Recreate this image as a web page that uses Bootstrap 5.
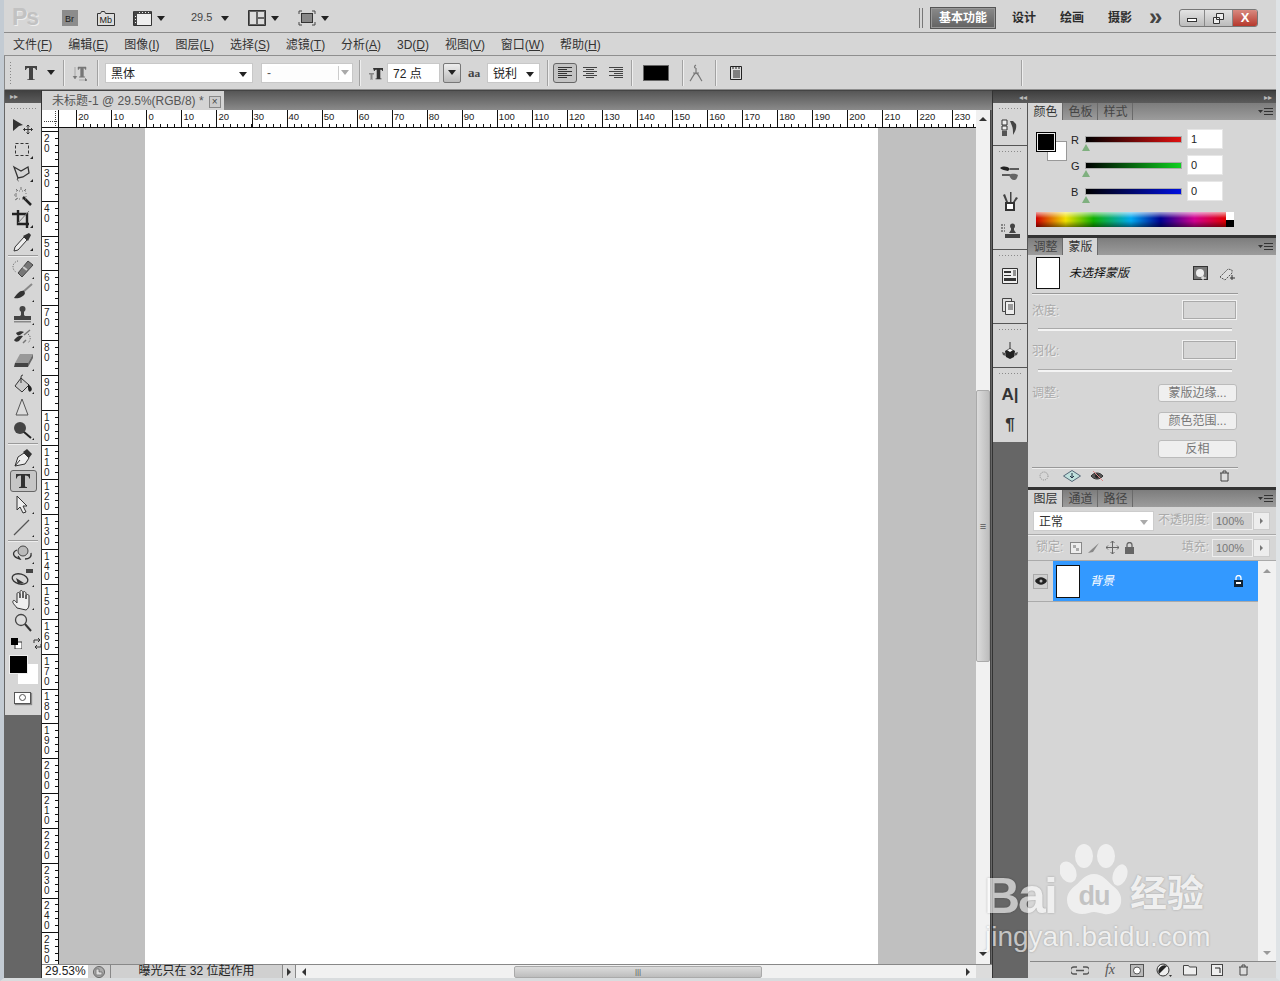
<!DOCTYPE html>
<html lang="zh-CN">
<head>
<meta charset="utf-8">
<title>Photoshop CS5</title>
<link href="https://cdn.jsdelivr.net/npm/bootstrap@5.3.0/dist/css/bootstrap.min.css" rel="stylesheet">
<style>
html,body{margin:0;height:981px;overflow:hidden;background:#c9ced3}
body{font-family:"Liberation Sans","Noto Sans CJK SC",sans-serif;font-size:12px;color:#333;line-height:1.2}
svg{display:block;flex:none}
.psapp{width:1280px;height:981px;border-left:4px solid #c3cbd3;border-right:4px solid #dfe3e6;border-bottom:3px solid #d9dcde;background:#d6d6d6;position:relative;overflow:hidden;box-shadow:inset 0 -1px 0 #555}
.tbar{height:33px;flex:none;border-bottom:1px solid #8c8c8c;padding:4px 18px 0 0}
.pslogo{font-size:23px;color:#c2c2c2;font-weight:700;width:23px;margin-left:8px;text-shadow:1px 1px 0 #eee;letter-spacing:-1px}
.zoomval{margin-left:26px;width:21px;color:#444;font-size:11px}
.m5{margin-left:5px}.m9{margin-left:9px}.m18{margin-left:18px}.m19{margin-left:19px}.m27{margin-left:27px}.m7a{margin-left:7px}.m14a{margin-left:14px}
.m11{margin-left:11px}.m12{margin-left:12px}.m14{margin-left:14px}.m15{margin-left:15px}
.caret-d{display:inline-block;flex:none;width:0;height:0;border-top:5px solid #222;border-left:4px solid transparent;border-right:4px solid transparent}
.caret-l{border-top-color:#aaa}
.wsgrip{width:4px;height:20px;border-left:1px solid #777;border-right:1px solid #777;margin-right:7px}
.wsbtn{width:66px;height:22px;background:linear-gradient(#8a8a8a,#626262);border:1px solid #555;color:#fff;font-weight:700;text-align:center;line-height:20px;box-shadow:inset 0 0 0 1px #999;font-size:12px}
.wslink{font-weight:700;color:#2c2c2c;width:24px;white-space:nowrap;margin-left:24px}
.wslink1{margin-left:16px}
.wsmore{margin-left:17px;font-weight:700;font-size:24px;line-height:18px;color:#444;width:16px;margin-top:-3px}
.winbtns{margin-left:14px;width:79px;height:18px;border:1px solid #777;border-radius:3px;overflow:hidden;background:linear-gradient(#e4e4e4,#bcbcbc)}
.wmin{width:25px;border-right:1px solid #888}.wres{width:28px;border-right:1px solid #888}
.wclose{flex:1;background:linear-gradient(#d88a80,#b6382c);color:#fff;font-weight:700;font-size:13px}
.menubar{height:23px;flex:none;padding:2px 0 0 9px;gap:15.9px;color:#333;border-bottom:1px solid #8f8f8f}
.menubar span{white-space:nowrap}
.optbar{height:34px;flex:none;border-bottom:1px solid #8f8f8f;border-left:1px solid #888}
.opt-grip{width:3px;height:24px;margin-left:4px;background:radial-gradient(circle,#888 40%,transparent 45%) 0 0/3px 3px}
.opt-sep{width:1px;height:26px;background:#a2a2a2;box-shadow:1px 0 0 #eee;flex:none}
.fld{background:#fff;height:20px;flex:none;padding:3px 5px 0;border:1px solid #c8c8c8;color:#222}
.fld-font{width:148px;margin-left:7px}.fld-style{width:92px;margin-left:8px;padding:0 3px 0 5px}
.fld-size{width:53px;margin-left:3px}.fld-aa{width:53px;margin-left:3px}
.styleinner{width:72px;height:14px;border-right:1px solid #ccc;line-height:14px;color:#555;background:#fdfdfd}
.ddbtn{width:18px;height:20px;margin-left:3px;border:1px solid #777;border-radius:2px;background:linear-gradient(#eee,#bbb)}
.aatext{width:16px;margin-left:7px;font-family:"Liberation Serif",serif;font-size:13px;color:#444;font-weight:700}
.alignsel{width:24px;height:20px;margin-left:5px;border:1px solid #666;border-radius:3px;background:#c4c4c4}
.a2{margin-left:5px}.a3{margin-left:10px}
.colorbox{width:26px;height:16px;background:#000;border:1px solid #666;margin-left:11px}
.s1{margin-left:8px}.s2{margin-left:9px}.s3{margin-left:6px}.s4{margin-left:7px}.s5{margin-left:13px}.s6{margin-left:11px}.s7{margin-left:278px}
.i8{margin-left:8px}.i12{margin-left:12px}.i5{margin-left:5px}.i13{margin-left:13px}.i3{margin-left:3px}
.mainrow{height:888px;flex:none}
.toolbox{width:38px;background:#666;border-right:1px solid #333;flex:none}
.dockhead{height:13px;background:linear-gradient(#3f3f3f,#5c5c5c);color:#bbb;font-size:8px;line-height:13px;flex:none}
.tbhead{padding-left:5px;margin-left:1px}
.toolsbody{background:#d6d6d6;margin-left:1px;height:612px;padding-top:1px;flex:none}
.gripdots{height:3px;margin:3px 5px 0;background:radial-gradient(circle,#8a8a8a 40%,transparent 45%) 0 0/3px 3px}
.toollist{margin-top:5px}
.toolbtn{height:23px}
.toolsel{width:27px;height:22px;border:1px solid #666;border-radius:3px;background:#c6c6c6}
.toolsep{height:1px;margin:1.75px 3px;background:#9a9a9a;box-shadow:0 1px 0 #eee}
.colorpair{padding-left:6px;gap:10px;height:18px}
.swstack{display:grid;height:30px;margin:2px 0 0 4px;width:30px}
.swstack>div{grid-area:1/1}
.swbg{width:20px;height:20px;background:#fff;margin:9px 0 0 9px}
.swfg{width:19px;height:19px;background:#000;border:1px solid #eee}
.qmask{width:17px;height:12px;background:#fff;border:1px solid #555;margin:7px 0 0 9px;box-shadow:1px 1px 1px #888}
.qmask i{display:block;width:7px;height:7px;border:1px solid #555;border-radius:50%}
.center{width:950px;flex:none;background:#666}
.tabbar{height:20px;background:linear-gradient(#565656,#8a8a8a);flex:none;border-top:1px solid #444}
.doctab{width:182px;height:19px;background:#d4d4d4;color:#555;padding:2px 0 0 10px;font-size:12px;white-space:nowrap;gap:5px}
.tabx{width:12px;height:12px;border:1px solid #888;background:#ccc;font-size:10px;line-height:9px;text-align:center;color:#444}
.workrow{min-height:0}
.workarea{width:934px;flex:none;min-height:0}
.hrow{height:18px;flex:none}
.rcorner{width:17px;background-color:#fff;border-right:1px solid #111;border-bottom:1px solid #111;flex:none;background-image:repeating-linear-gradient(#444 0 1px,transparent 1px 2px),repeating-linear-gradient(90deg,#444 0 1px,transparent 1px 2px);background-size:1px 15px,14px 1px;background-repeat:no-repeat;background-position:13px 1px,2px 11px}
.hruler{flex:1;display:flex;overflow:hidden;background:#fff;border-bottom:1px solid #111;padding-left:17.3px}
.hc{width:35.05px;flex:none;border-left:1px solid #111;font-size:9.5px;line-height:12px;padding:1px 0 0 1px;color:#222;background:repeating-linear-gradient(90deg,transparent 0,transparent 6px,#111 6px,#111 7.01px) 0 100%/100% 3px no-repeat}
.canvasrow{flex:1;min-height:0}
.vruler{width:17px;flex:none;background:#fff;border-right:1px solid #111;overflow:hidden;padding-top:3px}
.vc{height:34.85px;border-top:1px solid #111;font-size:10px;line-height:10px;padding:2px 0 0 2px;color:#222;background:repeating-linear-gradient(0deg,transparent 0,transparent 6px,#111 6px,#111 6.97px) 100% 0/3px 100% no-repeat;overflow:hidden}
.vc span{display:block;width:7px;word-break:break-all}
.canvasarea{flex:1;background:#c0c0c0;padding-left:86px;min-height:0}
.docpage{width:733px;height:100%;background:#fff}
.vscroll{width:15px;flex:none;background:#f1f1f1;border-right:1px solid #444;padding-top:3px}
.vthumb{height:272px;margin-top:269px;width:14px;background:linear-gradient(90deg,#dcdcdc,#bdbdbd);border:1px solid #aaa;border-radius:2px;font-size:11px;color:#555;line-height:8px}
.caret-u{width:0;height:0;border-bottom:4px solid #333;border-left:4px solid transparent;border-right:4px solid transparent}
.caret-dn{width:0;height:0;border-top:4px solid #333;border-left:4px solid transparent;border-right:4px solid transparent}
.caret-lf{width:0;height:0;border-right:4px solid #333;border-top:4px solid transparent;border-bottom:4px solid transparent}
.caret-rt{width:0;height:0;border-left:4px solid #333;border-top:4px solid transparent;border-bottom:4px solid transparent}
.statusbar{height:14px;flex:none;background:#dcdcdc;border-top:1px solid #888}
.stzoom{width:46px;background:#fff;padding-left:3px;height:100%;line-height:13px;color:#222;flex:none}
.sticon{width:23px;height:100%;background:#d0d0d0;border-right:1px solid #888;flex:none}
.stmsg{width:172px;height:100%;background:#d0d0d0;text-align:center;color:#222;line-height:13px;flex:none;border-right:1px solid #888}
.starrow{width:13px;height:100%;background:#dedede;border-right:1px solid #888;flex:none}
.hscroll{width:680px;height:100%;background:#f1f1f1;padding:0 6px;flex:none}
.hthumb{width:248px;height:12px;margin-left:208px;background:linear-gradient(#dcdcdc,#bdbdbd);border:1px solid #aaa;border-radius:2px;font-size:8px;color:#555;line-height:8px}
.dock{width:284px;flex:none;background:#666;border-left:1px solid #333;min-height:0}
.dockhead-r{padding:0 4px 0 26px;border-top:1px solid #333}
.dockbody{min-height:0}
.iconcol{width:35px;flex:none;background:#666}
.iconcol-g{background:#d6d6d6;border-bottom:1px solid #555;border-right:1px solid #555;padding-top:1px}
.g1{height:43px}.g2{height:104px}.g3{height:74px}.g4{height:44px}.g5{height:74px;border-bottom:0}
.dicon{height:30px}
.dm3{margin-top:3px}.dm4{margin-top:4px}.dm5{margin-top:5px}
.dockA{font-size:17px;color:#333;line-height:22px}
.panelcol{width:248px;flex:none;background:#333}
.pnl{background:#d6d6d6;flex:none}
.pn1{height:132px}.pn2{height:249px;margin-top:3px}.pn3{flex:1;margin-top:3px;min-height:0}
.ptabs{height:17px;background:linear-gradient(#7d7d7d,#9c9c9c);padding:0;flex-wrap:nowrap;flex:none}
.ptabs .nav-link{height:17px;width:35px;padding:0 0 0 1px;text-align:center;color:#444;line-height:19px;font-size:12px;border-right:1px solid #6a6a6a;border-radius:0;flex:none}
.ptabs .nav-link.active{background:#d6d6d6;color:#333}
.pmenu{margin-left:auto;margin-right:3px;align-self:center}
.cbody{padding:9px 0 0 8px;height:115px}
.swsmall{display:grid;width:32px;height:32px;flex:none}
.swsmall>div{grid-area:1/1}
.sb{width:20px;height:20px;background:#fff;border:1px solid #999;margin:12px 0 0 11px}
.sf{width:20px;height:20px;background:#000;border:1px solid #000;outline:1px solid #eee;outline-offset:-2px;margin:3px 0 0 0}
.cslid{width:152px;margin-left:3px}
.csrow{height:26px}
.cslab{width:14px;color:#222;font-size:11px;margin-top:5px}
.cslidbar{padding-top:7px;width:97px;flex:none}
.cbar{width:97px;height:7px;border:1px solid #aaa}
.cr{background:linear-gradient(90deg,#000,#e01010)}.cg{background:linear-gradient(90deg,#000,#0fd020)}.cb{background:linear-gradient(90deg,#000,#0010e0)}
.ctri{width:0;height:0;border-bottom:7px solid #7fb07f;border-left:4px solid transparent;border-right:4px solid transparent;margin-top:1px;margin-left:-3px}
.cval{width:36px;height:20px;margin-left:5px;background:#fff;border:1px solid #e6e6e6;padding:0 0 0 3px;line-height:18px;color:#222;font-size:11px}
.spect{width:198px;height:15px;margin-top:5px;display:flex;background:linear-gradient(rgba(255,255,255,.65),rgba(255,255,255,0) 40%,rgba(0,0,0,0) 60%,rgba(0,0,0,.45)),linear-gradient(90deg,#d00000,#f0e000 15%,#10b000 29%,#00a8f0 48%,#000090 63%,#d00090 80%,#e00000 96%);justify-content:flex-end}
.spbw{width:8px;background:linear-gradient(#fff 50%,#000 50%)}
.adj{padding:2px 38px 0 4px}
.mthumb{width:24px;height:32px;background:#fff;border:1px solid #111;margin-left:4px;flex:none}
.mrow{height:32px}
.mtext{font-style:italic;margin-left:9px;color:#111;width:124px;flex:none}
.phr{height:1px;background:#999;margin-top:4px;box-shadow:0 1px 0 #eee}
.disl{color:#aaa;text-shadow:1px 1px 0 #eee;width:150px;flex:none;padding-top:2px}
.disin{width:55px;height:20px;border:1px solid #f2f2f2;outline:1px solid #aaa;outline-offset:-2px}
.plrow{height:20px;margin-top:6px}
.plrow2{margin-top:9px}
.psl{height:3px;margin:8px 6px 0;background:#f4f4f4;border-top:1px solid #aaa}
.psl2{margin:9px 6px 7px}
.pbtn.btn{--bs-btn-padding-y:0;--bs-btn-padding-x:0;width:79px;height:18px;background:#efefef;border:1px solid #bbb;border-radius:3px;color:#777;font-size:12px;line-height:16px;display:block}
.brow{height:28px}
.adjl{width:126px;color:#aaa;text-shadow:1px 1px 0 #eee;flex:none}
.adjfoot{padding:0 8px 0 0;height:16px}
.lyr1{height:27px;padding:0 6px 0 5px;flex:none}
.lsel{width:121px;height:20px;background:#fff;border:1px solid #ccc;padding:3px 5px 0;color:#333;flex:none}
.ltxt{color:#aaa;text-shadow:1px 1px 0 #eee;white-space:nowrap}
.lmode{margin-left:4px;width:54px;flex:none}
.lfill{margin-right:-2px}
.lval{width:41px;height:18px;background:#d0d0d0;border:1px solid #eee;color:#777;padding-left:3px;line-height:16px;font-size:11px;flex:none}
.lbtn{width:17px;height:18px;background:#ededed;border:1px solid #ccc;flex:none}
.caret-g{width:0;height:0;border-left:3px solid #777;border-top:3px solid transparent;border-bottom:3px solid transparent}
.lyr2{height:27px;padding:0 6px 0 8px;border-top:1px solid #aaa;box-shadow:inset 0 1px 0 #eee;gap:5px;border-bottom:1px solid #aaa;flex:none}
.llock{width:29px;color:#aaa;text-shadow:1px 1px 0 #eee;white-space:nowrap}
.lyrlist{flex:1;min-height:0}
.lyrmain{width:230px;flex:none}
.lyrrow{height:41px;border-bottom:1px solid #aaa}
.eyecol{width:25px;height:40px;padding-left:5px;flex:none}
.eyebox{width:15px;height:15px;border:1px solid #aaa;background:#cfcfcf}
.lyrblue{flex:1;height:40px;background:#3399ff;padding-left:3px;color:#fff;font-style:italic}
.lthumb{width:24px;height:33px;background:#fff;border:1px solid #111;flex:none}
.lname{margin-left:10px;width:143px;flex:none}
.lscroll{width:18px;flex:none;background:#f1f1f1;padding:8px 0 6px}
.lscroll .caret-u{border-bottom-color:#999}.lscroll .caret-dn{border-top-color:#999}
.lfoot{height:17px;border-top:1px solid #888;flex:none;padding-left:41px;margin-left:2px}
.fxt{font-family:"Liberation Serif",serif;font-style:italic;font-size:14px;color:#555;width:18px;text-align:center;line-height:16px;margin-left:12px}
.wmark{position:absolute;left:973px;top:842px;width:240px;height:112px;color:#fff;opacity:.62;pointer-events:none;z-index:5;overflow:visible;text-shadow:0 0 2px rgba(0,0,0,.45)}
.wm1{height:74px}
.wmbai{font-weight:700;font-size:50px;letter-spacing:-2px;line-height:40px;margin-top:34px;width:83px;flex:none;padding-left:7px;white-space:nowrap}
.wmpaw{width:68px;height:76px;flex:none;display:grid}
.wmpaw>*{grid-area:1/1}
.wmdu{font-weight:700;font-size:27px;color:#b9b9b9;text-align:center;margin-top:42px;line-height:24px;letter-spacing:-1px;text-shadow:none}
.wmcn{font-weight:700;font-size:37px;line-height:40px;margin-top:33px;margin-left:2px;white-space:nowrap}
.wmurl{font-size:28px;line-height:34px;margin-top:4px;margin-left:8px;white-space:nowrap}
</style>
</head>
<body>
<div class="psapp d-flex flex-column">

<div class="tbar d-flex align-items-center">
  <div class="pslogo">Ps</div>
  <svg class="m27" width="16" height="16" viewBox="0 0 16 16"><rect width="16" height="16" fill="#8c8c8c"/><text x="3" y="12" font-size="9" font-family="Liberation Sans" fill="#222">Br</text></svg>
  <svg class="m19" width="18" height="16" viewBox="0 0 18 16"><path d="M.5 3.500h3l1-2h3l1 2h9v12H.5z" fill="#ddd" stroke="#333"/><text x="2.500" y="13" font-size="9" font-family="Liberation Sans" fill="#222">Mb</text></svg>
  <svg class="m18" width="19" height="16" viewBox="0 0 19 16"><path d="M.5 1.500h18v14H.5z" fill="#eee" stroke="#333"/><path d="M1 1h17v3H1zM1 4h3v11H1z" fill="#444"/><path d="M2 6h1v1H2zM2 9h1v1H2zM2 12h1v1H2zM6 2h1v1H6zM9 2h1v1H9zM12 2h1v1h-1zM15 2h1v1h-1z" fill="#eee"/></svg>
  <span class="caret-d m5"></span>
  <div class="zoomval">29.5</div>
  <span class="caret-d m9"></span>
  <svg class="m19" width="18" height="16" viewBox="0 0 18 16"><path d="M.5.5h17v15H.5z" fill="#666" stroke="#333"/><path d="M2 2h6v12H2zM10 2h6v5h-6zM10 9h6v5h-6z" fill="#ddd"/></svg>
  <span class="caret-d m5"></span>
  <svg class="m19" width="18" height="16" viewBox="0 0 18 16"><path d="M1 4V1h3M14 1h3v3M17 12v3h-3M4 15H1v-3" fill="none" stroke="#444"/><rect x="3.500" y="3.500" width="11" height="9" fill="#888" stroke="#333"/></svg>
  <span class="caret-d m5"></span>
  <div class="ms-auto d-flex align-items-center">
    <div class="wsgrip"></div>
    <div class="wsbtn">基本功能</div>
    <div class="wslink wslink1">设计</div>
    <div class="wslink">绘画</div>
    <div class="wslink">摄影</div>
    <div class="wsmore">»</div>
    <div class="winbtns d-flex">
      <div class="wmin d-flex align-items-center justify-content-center"><svg width="10" height="8" viewBox="0 0 10 8"><rect x=".5" y="4.500" width="9" height="3" fill="#fff" stroke="#333"/></svg></div>
      <div class="wres d-flex align-items-center justify-content-center"><svg width="11" height="11" viewBox="0 0 11 11"><path d="M3.500.5h7v6h-7zM.5 4.500h6v6h-6z" fill="#eee" stroke="#333"/></svg></div>
      <div class="wclose d-flex align-items-center justify-content-center">X</div>
    </div>
  </div>
</div>

<nav class="menubar d-flex align-items-center">
  <span>文件(<u>F</u>)</span><span>编辑(<u>E</u>)</span><span>图像(<u>I</u>)</span><span>图层(<u>L</u>)</span><span>选择(<u>S</u>)</span><span>滤镜(<u>T</u>)</span><span>分析(<u>A</u>)</span><span>3D(<u>D</u>)</span><span>视图(<u>V</u>)</span><span>窗口(<u>W</u>)</span><span>帮助(<u>H</u>)</span>
</nav>

<div class="optbar d-flex align-items-center">
  <div class="opt-grip"></div>
  <svg class="i12" width="14" height="16" viewBox="0 0 14 16"><path d="M1 1h12v4h-1c-.4-1.500-1-2-3-2v10.500c0 .8.500 1 2 1V15H3v-.5c1.500 0 2-.2 2-1V3c-2 0-2.600.5-3 2H1z" fill="#444"/></svg>
  <span class="caret-d m9"></span>
  <div class="opt-sep s1"></div>
  <svg class="i8" width="16" height="16" viewBox="0 0 16 16"><path d="M6 2h8v2.500h-.6c-.2-1-.6-1.300-2-1.300V11c0 .6.300.7 1.200.7v.6H7.400v-.6c.9 0 1.200-.1 1.200-.7V3.200c-1.400 0-1.800.3-2 1.300H6zM3 2v11M1 11l2 3 2-3M7 15h8M13 13l2 2-2 2" fill="#777" stroke="#777" stroke-width=".5"/></svg>
  <div class="opt-sep s2"></div>
  <div class="fld fld-font d-flex align-items-center justify-content-between"><span>黑体</span><span class="caret-d"></span></div>
  <div class="fld fld-style d-flex align-items-center justify-content-between"><div class="styleinner">-</div><span class="caret-d caret-l"></span></div>
  <div class="opt-sep s3"></div>
  <svg class="i8" width="16" height="16" viewBox="0 0 16 16"><path d="M5 3h10v3h-.7c-.2-1-.6-1.300-2-1.300V13c0 .5.300.6 1.200.6v.7H7.500v-.7c.9 0 1.200-.1 1.200-.6V4.700c-1.400 0-1.800.3-2 1.300H6z" fill="#333"/><path d="M1 8h5v1.500H4.500V14H5v.6H2V14h.5V9.500H1z" fill="#888"/></svg>
  <div class="fld fld-size d-flex align-items-center">72 点</div>
  <div class="ddbtn d-flex align-items-center justify-content-center"><span class="caret-d"></span></div>
  <div class="aatext">a<small>a</small></div>
  <div class="fld fld-aa d-flex align-items-center justify-content-between"><span>锐利</span><span class="caret-d"></span></div>
  <div class="opt-sep s4"></div>
  <div class="alignsel d-flex align-items-center justify-content-center"><svg width="14" height="12" viewBox="0 0 14 12"><path d="M0 .5h14M0 2.500h9M0 4.500h14M0 6.500h9M0 8.500h14M0 10.500h9" stroke="#333"/></svg></div>
  <svg class="a2" width="16" height="12" viewBox="0 0 16 12"><path d="M1 .5h14M4 2.500h8M1 4.500h14M4 6.500h8M1 8.500h14M4 10.500h8" stroke="#444"/></svg>
  <svg class="a3" width="16" height="12" viewBox="0 0 16 12"><path d="M1 .5h14M6 2.500h9M1 4.500h14M6 6.500h9M1 8.500h14M6 10.500h9" stroke="#444"/></svg>
  <div class="opt-sep s4"></div>
  <div class="colorbox"></div>
  <div class="opt-sep s5"></div>
  <svg class="i5" width="16" height="18" viewBox="0 0 16 18"><path d="M8 1c-2 1-2 3 0 3M8 4v5M2 17c2-2 3-7 6-8 3 1 4 6 6 8M5 9h6" fill="none" stroke="#777" stroke-width="1.200"/></svg>
  <div class="opt-sep s6"></div>
  <svg class="i13" width="14" height="16" viewBox="0 0 14 16"><path d="M1.500 1.500h11v13h-11z" fill="#ddd" stroke="#222"/><path d="M4 1v3M7 1v3M10 1v3M4 6h7M4 8h7M4 10h7M4 12h7" stroke="#222"/></svg>
  <div class="opt-sep s7"></div>
</div>

<div class="mainrow d-flex">
  <aside class="toolbox d-flex flex-column">
    <div class="dockhead tbhead">▸▸</div>
    <div class="toolsbody">
      <div class="gripdots"></div>
      <div class="toollist d-flex flex-column">
        <div class="toolbtn d-flex align-items-center justify-content-center"><svg width="24" height="18" viewBox="0 0 24 18"><path d="M2 1l10 6-4 1-6 5z" fill="#333"/><path d="M17 7v9M12.500 11.500h9M15.500 8.500L17 7l1.500 1.500M15.500 14.500L17 16l1.500-1.500M14 10l-1.500 1.500L14 13M20 10l1.500 1.500L20 13" fill="none" stroke="#333"/></svg></div>
        <div class="toolbtn d-flex align-items-center justify-content-center"><svg width="24" height="20" viewBox="0 0 24 20"><rect x="4.500" y="3.500" width="13" height="12" fill="none" stroke="#333" stroke-dasharray="3 2"/><path d="M22 19h-3l3-3z" fill="#222"/></svg></div>
        <div class="toolbtn d-flex align-items-center justify-content-center"><svg width="24" height="20" viewBox="0 0 24 20"><path d="M3 4l7 4 7-4 1 6-6 4-5 1z" fill="none" stroke="#333" stroke-width="1.300"/><path d="M7 15c-1 1-1 2 .5 3" fill="none" stroke="#333"/><path d="M22 19h-3l3-3z" fill="#222"/></svg></div>
        <div class="toolbtn d-flex align-items-center justify-content-center"><svg width="24" height="20" viewBox="0 0 24 20"><path d="M12 11l8 8" stroke="#222" stroke-width="2.500"/><path d="M5 5h10v8H5z" fill="none" stroke="#777" stroke-dasharray="1 2"/><path d="M3 9h3M10 1v3M15 3l-2 2M5 3l2 2M4 14l3-2" stroke="#777"/></svg></div>
        <div class="toolbtn d-flex align-items-center justify-content-center"><svg width="24" height="20" viewBox="0 0 24 20"><path d="M7 1v14h11M1 5h15v14" fill="none" stroke="#222" stroke-width="2.400"/><path d="M7 14L18 2" stroke="#777"/><path d="M22 19h-3l3-3z" fill="#222"/></svg></div>
        <div class="toolbtn d-flex align-items-center justify-content-center"><svg width="24" height="20" viewBox="0 0 24 20"><path d="M13 5L4 15l-1 4 4-1 9-10z" fill="#eee" stroke="#333"/><path d="M12 4l6-3 2 2-3 6z" fill="#333"/><path d="M22 19h-3l3-3z" fill="#222"/></svg></div>
      </div>
      <div class="toolsep"></div>
      <div class="d-flex flex-column">
        <div class="toolbtn d-flex align-items-center justify-content-center"><svg width="24" height="20" viewBox="0 0 24 20"><path d="M7 14L17 2l5 4-11 12z" fill="#777" stroke="#444"/><path d="M12 8l4 3" stroke="#ccc" stroke-width="2"/><path d="M7 2a6 6 0 0 0-5 6 6 6 0 0 0 3 5" fill="none" stroke="#555" stroke-dasharray="1 1.500"/><path d="M23 20h-2l2-2z" fill="#222"/></svg></div>
        <div class="toolbtn d-flex align-items-center justify-content-center"><svg width="24" height="20" viewBox="0 0 24 20"><path d="M21 2L12 10" stroke="#888" stroke-width="2"/><path d="M13 9c-4-1-7 3-10 7 4 1 10-1 11-5z" fill="#333"/><path d="M23 20h-2l2-2z" fill="#222"/></svg></div>
        <div class="toolbtn d-flex align-items-center justify-content-center"><svg width="24" height="20" viewBox="0 0 24 20"><circle cx="11.500" cy="4" r="3" fill="#444"/><path d="M10 6h3v4l2 2H8l2-2z" fill="#444"/><path d="M3 11h17v4H3z" fill="#444"/><path d="M3 16h17v1.500H3z" fill="#888"/><path d="M23 20h-2l2-2z" fill="#222"/></svg></div>
        <div class="toolbtn d-flex align-items-center justify-content-center"><svg width="24" height="20" viewBox="0 0 24 20"><path d="M3 12c3-4 6-5 9-4l-4 5c-2 1-4 1-5-1zM5 5c3-2 6-2 8-1l-4 3c-2 1-3 0-4-2z" fill="#333"/><path d="M13 7l6-5M12 15l3-3" stroke="#777" stroke-width="1.500"/><path d="M17 6c3 2 3 6 0 9" fill="none" stroke="#555" stroke-dasharray="1 1.500"/><path d="M23 20h-2l2-2z" fill="#222"/></svg></div>
        <div class="toolbtn d-flex align-items-center justify-content-center"><svg width="24" height="20" viewBox="0 0 24 20"><path d="M9 3h13l-5 9H4z" fill="#999"/><path d="M4 12h13v4H3z" fill="#444"/><path d="M17 12l5-9v4l-5 9z" fill="#666"/><path d="M23 20h-2l2-2z" fill="#222"/></svg></div>
        <div class="toolbtn d-flex align-items-center justify-content-center"><svg width="24" height="20" viewBox="0 0 24 20"><path d="M10 4l8 7-7 7-7-6z" fill="#ccc" stroke="#333"/><path d="M10 9V3a2 2 0 0 1 2-2" fill="none" stroke="#333"/><path d="M17 10c3 2 5 5 3 7s-3-1-3-3z" fill="#222"/><path d="M23 20h-2l2-2z" fill="#222"/></svg></div>
        <div class="toolbtn d-flex align-items-center justify-content-center"><svg width="24" height="20" viewBox="0 0 24 20"><path d="M11 2L5 18h12z" fill="#ddd" stroke="#555"/></svg></div>
        <div class="toolbtn d-flex align-items-center justify-content-center"><svg width="24" height="20" viewBox="0 0 24 20"><circle cx="9" cy="8" r="6" fill="#444"/><path d="M13 12l7 6" stroke="#222" stroke-width="2"/><path d="M23 20h-2l2-2z" fill="#222"/></svg></div>
      </div>
      <div class="toolsep"></div>
      <div class="d-flex flex-column">
        <div class="toolbtn d-flex align-items-center justify-content-center"><svg width="24" height="20" viewBox="0 0 24 20"><path d="M4 18l3-9 6-4 5 5-4 6z" fill="#eee" stroke="#333"/><path d="M12 4l4-3 5 5-3 4z" fill="#333"/><path d="M4 18l5-6" stroke="#333"/><path d="M23 20h-2l2-2z" fill="#222"/></svg></div>
        <div class="toolbtn d-flex align-items-center justify-content-center"><div class="toolsel d-flex align-items-center justify-content-center"><svg width="16" height="16" viewBox="0 0 16 16"><path d="M1 1h14v4.500h-.8C14 3.500 13 2.500 10 2.500V13c0 .8.500 1 2 1v1H4v-1c1.500 0 2-.2 2-1V2.500C3 2.500 2 3.500 1.800 5.500H1z" fill="#333"/></svg></div></div>
        <div class="toolbtn d-flex align-items-center justify-content-center"><svg width="24" height="20" viewBox="0 0 24 20"><path d="M6 2l10 10h-4l3 6-3 1-3-6-3 3z" fill="#eee" stroke="#333"/><path d="M23 20h-2l2-2z" fill="#222"/></svg></div>
        <div class="toolbtn d-flex align-items-center justify-content-center"><svg width="24" height="20" viewBox="0 0 24 20"><path d="M3 18L18 3" stroke="#555" stroke-width="1.300"/><path d="M23 20h-2l2-2z" fill="#222"/></svg></div>
      </div>
      <div class="toolsep"></div>
      <div class="d-flex flex-column">
        <div class="toolbtn d-flex align-items-center justify-content-center"><svg width="24" height="20" viewBox="0 0 24 20"><circle cx="12" cy="7" r="5" fill="#bbb" stroke="#444"/><path d="M6 6c-5 2-5 7 3 9l-2-3M14 15c4 0 7-2 6-6" fill="none" stroke="#333" stroke-width="1.300"/><path d="M23 20h-2l2-2z" fill="#222"/></svg></div>
        <div class="toolbtn d-flex align-items-center justify-content-center"><svg width="24" height="20" viewBox="0 0 24 20"><ellipse cx="9" cy="12" rx="8" ry="5" fill="none" stroke="#333" stroke-width="1.300" transform="rotate(15 9 12)"/><path d="M5 11l8 5-6 1z" fill="#333"/><rect x="15" y="2" width="7" height="4" fill="#444"/><path d="M23 20h-2l2-2z" fill="#222"/></svg></div>
        <div class="toolbtn d-flex align-items-center justify-content-center"><svg width="24" height="22" viewBox="0 0 24 22"><path d="M6 19c-2-3-5-5-4-7s3 1 4 2V5c0-2 2-2 3 0v4-6c0-2 2-2 3 0v6-5c0-2 2-2 3 0v6-3c0-2 3-2 3 0v8c0 3-1 5-3 6z" fill="#eee" stroke="#333"/><path d="M23 21h-2l2-2z" fill="#222"/></svg></div>
        <div class="toolbtn d-flex align-items-center justify-content-center"><svg width="24" height="20" viewBox="0 0 24 20"><circle cx="10" cy="7" r="5.500" fill="#ddd" stroke="#444" stroke-width="1.300"/><path d="M14 11l6 7" stroke="#333" stroke-width="2"/></svg></div>
      </div>
      <div class="colorpair d-flex align-items-center">
        <svg width="11" height="11" viewBox="0 0 11 11"><rect x="4" y="4" width="7" height="7" fill="#fff" stroke="#333"/><rect width="7" height="7" fill="#000"/></svg>
        <svg width="11" height="11" viewBox="0 0 11 11"><path d="M2 5V2h5M6 0l2 2-2 2M9 6v3H4M5 7L3 9l2 2" fill="none" stroke="#333"/></svg>
      </div>
      <div class="swstack"><div class="swbg"></div><div class="swfg"></div></div>
      <div class="qmask d-flex align-items-center justify-content-center"><i></i></div>
    </div>
  </aside>

  <main class="center d-flex flex-column">
    <div class="tabbar d-flex"><div class="doctab d-flex align-items-center"><span>未标题-1 @ 29.5%(RGB/8) *</span><div class="tabx">×</div></div></div>
    <div class="d-flex flex-grow-1 workrow">
      <div class="workarea d-flex flex-column">
        <div class="hrow d-flex">
          <div class="rcorner"></div>
          <div class="hruler">
            <div class="hc">20</div><div class="hc">10</div><div class="hc">0</div><div class="hc">10</div><div class="hc">20</div><div class="hc">30</div><div class="hc">40</div><div class="hc">50</div><div class="hc">60</div><div class="hc">70</div><div class="hc">80</div><div class="hc">90</div><div class="hc">100</div><div class="hc">110</div><div class="hc">120</div><div class="hc">130</div><div class="hc">140</div><div class="hc">150</div><div class="hc">160</div><div class="hc">170</div><div class="hc">180</div><div class="hc">190</div><div class="hc">200</div><div class="hc">210</div><div class="hc">220</div><div class="hc">230</div>
          </div>
        </div>
        <div class="d-flex canvasrow">
          <div class="vruler">
            <div class="vc"><span>20</span></div><div class="vc"><span>30</span></div><div class="vc"><span>40</span></div><div class="vc"><span>50</span></div><div class="vc"><span>60</span></div><div class="vc"><span>70</span></div><div class="vc"><span>80</span></div><div class="vc"><span>90</span></div><div class="vc"><span>100</span></div><div class="vc"><span>110</span></div><div class="vc"><span>120</span></div><div class="vc"><span>130</span></div><div class="vc"><span>140</span></div><div class="vc"><span>150</span></div><div class="vc"><span>160</span></div><div class="vc"><span>170</span></div><div class="vc"><span>180</span></div><div class="vc"><span>190</span></div><div class="vc"><span>200</span></div><div class="vc"><span>210</span></div><div class="vc"><span>220</span></div><div class="vc"><span>230</span></div><div class="vc"><span>240</span></div><div class="vc"><span>250</span></div>
          </div>
          <div class="canvasarea"><div class="docpage"></div></div>
        </div>
      </div>
      <div class="vscroll d-flex flex-column align-items-center">
        <div class="caret-u mt-1"></div>
        <div class="vthumb d-flex align-items-center justify-content-center">≡</div>
        <div class="caret-dn mt-auto mb-2"></div>
      </div>
    </div>
    <div class="statusbar d-flex">
      <div class="stzoom">29.53%</div>
      <div class="sticon d-flex align-items-center justify-content-center"><svg width="12" height="12" viewBox="0 0 12 12"><circle cx="6" cy="6" r="5.500" fill="#aaa" stroke="#666"/><path d="M3 3h3v3h3v3H3z" fill="#ddd" stroke="#555" stroke-width=".6"/></svg></div>
      <div class="stmsg">曝光只在 32 位起作用</div>
      <div class="starrow d-flex align-items-center justify-content-center"><div class="caret-rt"></div></div>
      <div class="hscroll d-flex align-items-center">
        <div class="caret-lf"></div>
        <div class="hthumb d-flex align-items-center justify-content-center">|||</div>
        <div class="caret-rt ms-auto"></div>
      </div>
    </div>
  </main>

  <aside class="dock d-flex flex-column">
    <div class="dockhead dockhead-r d-flex justify-content-between"><span>◂◂</span><span>▸▸</span></div>
    <div class="d-flex flex-grow-1 dockbody">
      <div class="iconcol">
        <div class="iconcol-g g1"><div class="gripdots"></div>
          <div class="dicon dm3 d-flex align-items-center justify-content-center"><svg width="18" height="18" viewBox="0 0 18 18"><path d="M1 1h5v5H1zM1 7h5v4H1z" fill="#eee" stroke="#333"/><path d="M1 12h5v5H1z" fill="#555"/><path d="M9 2h3l3 3c1 4-1 8-3 11 0-4 0-7-1-9z" fill="#444"/></svg></div>
        </div>
        <div class="iconcol-g g2"><div class="gripdots"></div>
          <div class="dicon dm4 d-flex align-items-center justify-content-center"><svg width="20" height="18" viewBox="0 0 20 18"><path d="M0 5c3-2 7-2 10 1l-2 2c-3-1-6-1-8-3z" fill="#222"/><path d="M10 6h9M2 12h8" stroke="#333" stroke-width="1.500"/><path d="M9 12c3-2 7-1 9 0-1 4-2 5-4 5s-4-2-5-5z" fill="#666"/></svg></div>
          <div class="dicon d-flex align-items-center justify-content-center"><svg width="18" height="20" viewBox="0 0 18 20"><path d="M4 10h10v9H4z" fill="#333"/><path d="M6 12h6v5H6z" fill="#fff"/><path d="M5 10L2 3l2-1 3 8M9 10V0h1.500v10M12 10l3-5 2 1-3 4" fill="#444"/></svg></div>
          <div class="dicon d-flex align-items-center justify-content-center"><svg width="20" height="18" viewBox="0 0 20 18"><path d="M1 2h4M1 5h4M1 8h4" stroke="#333" stroke-dasharray="2 1"/><circle cx="12.500" cy="3" r="2.500" fill="#444"/><path d="M11 4h3v3l2 3H9l2-3z" fill="#444"/><path d="M5 11h15v4H5z" fill="#444"/></svg></div>
        </div>
        <div class="iconcol-g g3"><div class="gripdots"></div>
          <div class="dicon dm4 d-flex align-items-center justify-content-center"><svg width="16" height="16" viewBox="0 0 16 16"><path d="M.5.5h15v15H.5z" fill="#eee" stroke="#333"/><path d="M2 3h7v2H2zM2 7h7v1H2zM2 10h12v3H2z" fill="#333"/><path d="M11 3h3M11 5h3M11 7h3" stroke="#333"/></svg></div>
          <div class="dicon d-flex align-items-center justify-content-center"><svg width="18" height="20" viewBox="0 0 18 20"><path d="M1.500 2.500h9v13h-9z" fill="#ddd" stroke="#444"/><path d="M4.500 5.500h9v13h-9z" fill="#eee" stroke="#444"/><path d="M7 9h5M7 11h5M7 13h5" stroke="#444"/></svg></div>
        </div>
        <div class="iconcol-g g4"><div class="gripdots"></div>
          <div class="dicon dm5 d-flex align-items-center justify-content-center"><svg width="18" height="18" viewBox="0 0 18 18"><path d="M9 0v6" stroke="#333"/><path d="M9 6l-5 3 1 6 4 2 4-2 1-6z" fill="#222"/><path d="M6 8l3-1 3 1-3 2z" fill="#fff"/><path d="M1 10l3 1 1 3-3-1zM17 10l-3 1-1 3 3-1z" fill="#555"/></svg></div>
        </div>
        <div class="iconcol-g g5"><div class="gripdots"></div>
          <div class="dicon dm5 d-flex align-items-center justify-content-center"><span class="fw-bold dockA">A|</span></div>
          <div class="dicon d-flex align-items-center justify-content-center"><span class="fw-bold dockA">¶</span></div>
        </div>
      </div>
      <div class="panelcol d-flex flex-column">
        <section class="pnl pn1">
          <ul class="nav ptabs"><li class="nav-item"><span class="nav-link active">颜色</span></li><li class="nav-item"><span class="nav-link">色板</span></li><li class="nav-item"><span class="nav-link">样式</span></li>
            <li class="pmenu"><svg width="15" height="8" viewBox="0 0 15 8"><path d="M0 2h5L2.500 5z" fill="#333"/><path d="M6 .5h9M6 3.500h9M6 6.500h9" stroke="#333"/></svg></li></ul>
          <div class="cbody">
            <div class="d-flex">
              <div class="swsmall"><div class="sb"></div><div class="sf"></div></div>
              <div class="cslid">
                <div class="csrow d-flex align-items-start"><div class="cslab">R</div><div class="cslidbar"><div class="cbar cr"></div><div class="ctri"></div></div><div class="cval">1</div></div>
                <div class="csrow d-flex align-items-start"><div class="cslab">G</div><div class="cslidbar"><div class="cbar cg"></div><div class="ctri"></div></div><div class="cval">0</div></div>
                <div class="csrow d-flex align-items-start"><div class="cslab">B</div><div class="cslidbar"><div class="cbar cb"></div><div class="ctri"></div></div><div class="cval">0</div></div>
              </div>
            </div>
            <div class="spect"><div class="spbw"></div></div>
          </div>
        </section>
        <section class="pnl pn2">
          <ul class="nav ptabs"><li class="nav-item"><span class="nav-link">调整</span></li><li class="nav-item"><span class="nav-link active">蒙版</span></li>
            <li class="pmenu"><svg width="15" height="8" viewBox="0 0 15 8"><path d="M0 2h5L2.500 5z" fill="#333"/><path d="M6 .5h9M6 3.500h9M6 6.500h9" stroke="#333"/></svg></li></ul>
          <div class="adj">
            <div class="mrow d-flex align-items-center">
              <div class="mthumb"></div><div class="mtext">未选择蒙版</div>
              <svg width="16" height="15" viewBox="0 0 16 15"><rect x=".5" y=".5" width="14" height="13" fill="#777" stroke="#333"/><circle cx="7" cy="7" r="4" fill="#eee"/><path d="M10 10v4M8 12h5" stroke="#fff"/></svg>
              <svg class="m9" width="18" height="15" viewBox="0 0 18 15"><path d="M2 11L10 3l4 1 0 3-7 7z" fill="#ddd" stroke="#555" stroke-dasharray="2 1"/><path d="M14 9v5M12 12h5" stroke="#333"/></svg>
            </div>
            <div class="phr"></div>
            <div class="plrow d-flex align-items-center"><div class="disl">浓度:</div><div class="disin"></div></div>
            <div class="psl"></div>
            <div class="plrow plrow2 d-flex align-items-center"><div class="disl">羽化:</div><div class="disin"></div></div>
            <div class="psl psl2"></div>
            <div class="brow d-flex align-items-center"><div class="adjl">调整:</div><button type="button" class="btn pbtn">蒙版边缘...</button></div>
            <div class="brow d-flex align-items-center"><div class="adjl"></div><button type="button" class="btn pbtn">颜色范围...</button></div>
            <div class="brow d-flex align-items-center"><div class="adjl"></div><button type="button" class="btn pbtn">反相</button></div>
            <div class="phr"></div>
            <div class="adjfoot d-flex align-items-center">
              <svg class="m7a" width="10" height="10" viewBox="0 0 10 10"><circle cx="5" cy="5" r="4" fill="none" stroke="#888" stroke-dasharray="1 1"/></svg>
              <svg class="m14a" width="18" height="12" viewBox="0 0 18 12"><path d="M9 .5L17.500 6 9 11.500.5 6z" fill="#bfe0dc" stroke="#567"/><path d="M9 3v5M7 6l2 2 2-2" fill="none" stroke="#234"/></svg>
              <svg class="m9" width="16" height="12" viewBox="0 0 16 12"><path d="M1 6c3-4 9-4 12 0-3 4-9 4-12 0z" fill="#555" stroke="#333"/><circle cx="7" cy="6" r="2" fill="#222"/><path d="M3 1l10 10" stroke="#d88"/></svg>
              <svg class="ms-auto" width="11" height="12" viewBox="0 0 11 12"><path d="M1 3h9M4 3V1h3v2M2 3v8h7V3" fill="#ddd" stroke="#444"/></svg>
            </div>
          </div>
        </section>
        <section class="pnl pn3 d-flex flex-column">
          <ul class="nav ptabs"><li class="nav-item"><span class="nav-link active">图层</span></li><li class="nav-item"><span class="nav-link">通道</span></li><li class="nav-item"><span class="nav-link">路径</span></li>
            <li class="pmenu"><svg width="15" height="8" viewBox="0 0 15 8"><path d="M0 2h5L2.500 5z" fill="#333"/><path d="M6 .5h9M6 3.500h9M6 6.500h9" stroke="#333"/></svg></li></ul>
          <div class="lyr1 d-flex align-items-center">
            <div class="lsel d-flex align-items-center justify-content-between"><span>正常</span><span class="caret-d caret-l"></span></div>
            <div class="ltxt lmode">不透明度:</div>
            <div class="lval">100%</div>
            <div class="lbtn d-flex align-items-center justify-content-center"><div class="caret-g"></div></div>
          </div>
          <div class="lyr2 d-flex align-items-center">
            <div class="llock">锁定:</div>
            <svg width="12" height="12" viewBox="0 0 12 12"><rect x=".5" y=".5" width="11" height="11" fill="#eee" stroke="#888"/><path d="M3 3h3v3H3zM6 6h3v3H6z" fill="#aaa"/></svg>
            <svg width="14" height="12" viewBox="0 0 14 12"><path d="M1 11l3-3 8-7-6 9z" fill="#888"/></svg>
            <svg width="13" height="13" viewBox="0 0 13 13"><path d="M6.500 0v13M0 6.500h13M4.500 2L6.500 0l2 2M4.500 11l2 2 2-2M2 4.500l-2 2 2 2M11 4.500l2 2-2 2" fill="none" stroke="#666"/></svg>
            <svg width="11" height="12" viewBox="0 0 11 12"><path d="M3 5V3a2.500 2.500 0 0 1 5 0v2" fill="none" stroke="#666" stroke-width="1.300"/><rect x="1" y="5" width="9" height="7" fill="#666"/></svg>
            <div class="ltxt lfill ms-auto">填充:</div>
            <div class="d-flex"><div class="lval">100%</div><div class="lbtn d-flex align-items-center justify-content-center"><div class="caret-g"></div></div></div>
          </div>
          <div class="lyrlist d-flex">
            <div class="lyrmain">
              <div class="lyrrow d-flex align-items-start">
                <div class="eyecol d-flex align-items-center"><div class="eyebox d-flex align-items-center justify-content-center"><svg width="12" height="8" viewBox="0 0 12 8"><path d="M0 4c3-5 9-5 12 0-3 5-9 5-12 0z" fill="#222"/><circle cx="6" cy="4" r="1.500" fill="#bbb"/></svg></div></div>
                <div class="lyrblue d-flex align-items-center">
                  <div class="lthumb"></div><div class="lname">背景</div>
                  <svg width="11" height="12" viewBox="0 0 11 12"><path d="M3 5V3a2.500 2.500 0 0 1 5 0v2" fill="none" stroke="#fff" stroke-width="1.300"/><rect x="1" y="5" width="9" height="7" fill="#123"/><rect x="3" y="7" width="5" height="2" fill="#fff"/></svg>
                </div>
              </div>
            </div>
            <div class="lscroll d-flex flex-column align-items-center"><div class="caret-u"></div><div class="caret-dn mt-auto"></div></div>
          </div>
          <div class="lfoot d-flex align-items-center">
            <svg width="18" height="9" viewBox="0 0 18 9"><path d="M6 1H3a3.500 3.500 0 0 0 0 7h3M12 1h3a3.500 3.500 0 0 1 0 7h-3M5 4.500h8" fill="none" stroke="#555" stroke-width="1.300"/></svg>
            <div class="fxt">fx</div>
            <svg class="m11" width="14" height="13" viewBox="0 0 14 13"><rect x=".5" y=".5" width="13" height="12" fill="#bbb" stroke="#555"/><circle cx="7" cy="6.500" r="3.500" fill="#fff" stroke="#555"/></svg>
            <svg class="m12" width="16" height="14" viewBox="0 0 16 14"><circle cx="7" cy="7" r="6" fill="#eee" stroke="#333"/><path d="M11 3L3 11a6 6 0 0 1 8-8z" fill="#222"/><path d="M13 12h3l-1.500 2z" fill="#333"/></svg>
            <svg class="m11" width="14" height="12" viewBox="0 0 14 12"><path d="M.5 1.500h5l1 1.500h7v8H.5z" fill="#eee" stroke="#444"/></svg>
            <svg class="m14" width="12" height="12" viewBox="0 0 12 12"><rect x=".5" y=".5" width="11" height="11" fill="#eee" stroke="#444"/><path d="M4 4h5v5" fill="none" stroke="#222"/></svg>
            <svg class="m15" width="11" height="12" viewBox="0 0 11 12"><path d="M1 3h9M4 3V1h3v2M2 3v8h7V3" fill="#ddd" stroke="#444"/></svg>
          </div>
        </section>
      </div>
    </div>
  </aside>
</div>

<div class="wmark">
  <div class="d-flex wm1">
    <div class="wmbai">Bai</div>
    <div class="wmpaw">
      <svg width="68" height="76" viewBox="0 0 68 76"><ellipse cx="24" cy="14" rx="9" ry="12" fill="#fff"/><ellipse cx="46" cy="14" rx="9" ry="12" fill="#fff"/><ellipse cx="8" cy="30" rx="8" ry="11" fill="#fff" transform="rotate(-25 8 30)"/><ellipse cx="60" cy="33" rx="7" ry="11" fill="#fff" transform="rotate(20 60 33)"/><path d="M34 32c9 0 13 7 19 12 7 5 9 11 8 17-2 9-10 12-17 11-4-1-7-2-10-2s-7 2-12 2c-8 0-15-5-15-14 0-7 4-11 9-15s9-11 18-11z" fill="#fff"/></svg>
      <div class="wmdu">du</div>
    </div>
    <div class="wmcn">经验</div>
  </div>
  <div class="wmurl">jingyan.baidu.com</div>
</div>

</div>
</body>
</html>
